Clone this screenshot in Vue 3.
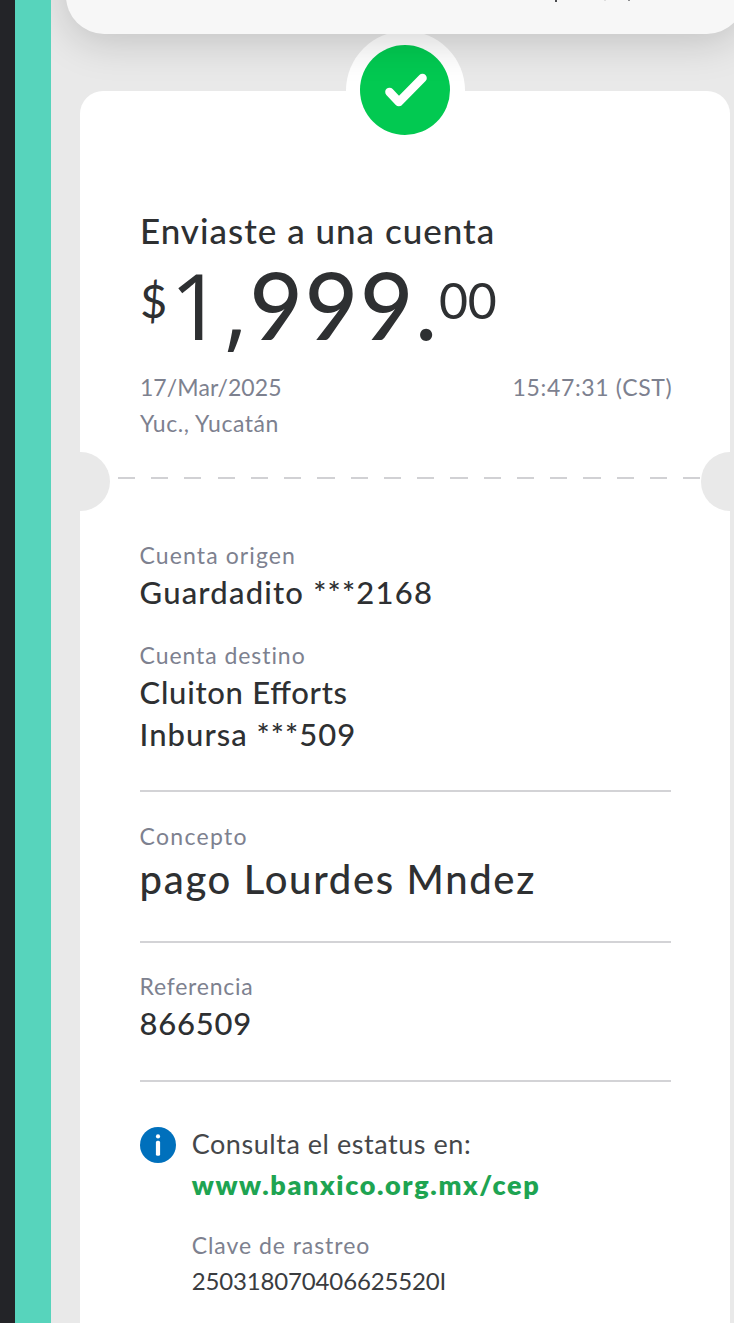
<template>
    <div class="screen">
        <div class="edge-dark"></div>
        <div class="edge-teal"></div>
        <div class="page">
            <div class="header-card">
                <span class="tail tail-main"></span>
                <span class="tail tail-comma"></span>
                <span class="tail tail-last"></span>
            </div>
            <div class="receipt">
                <div class="status">
                    <svg class="status-icon" viewBox="0 0 90 90">
                        <circle cx="45" cy="45" r="45" fill="#02c951" />
                        <path d="M29.5 47L38.9 57L62.5 33" fill="none" stroke="#fff" stroke-width="8.6"
                            stroke-linecap="round" stroke-linejoin="round" />
                    </svg>
                </div>
                <div class="summary">
                    <div class="title">Enviaste a una cuenta</div>
                    <div class="amount">
                        <span class="small currency">$</span>
                        <span class="big"><span class="thousand">1,</span>999.</span>
                        <span class="small cents">00</span>
                    </div>
                    <div class="when">
                        <span class="date">17/Mar/2025</span>
                        <span class="time">15:47:31 (CST)</span>
                    </div>
                    <div class="place">Yuc., Yucatán</div>
                </div>
                <div class="cut">
                    <div class="notch notch-left"></div>
                    <div class="dashes"></div>
                    <div class="notch notch-right"></div>
                </div>
                <div class="details">
                    <div class="group" v-for="item in details" :key="item.name" :class="item.name">
                        <div class="label">{{ item.label }}</div>
                        <div class="value" v-for="line in item.lines" :key="line.text" :class="line.name">{{ line.text }}</div>
                    </div>
                    <div class="check">
                        <svg class="info-icon" viewBox="0 0 36 36">
                            <circle cx="18" cy="18" r="18" fill="#0070bc" />
                            <circle cx="18" cy="9.4" r="2.1" fill="#fff" />
                            <rect x="15.9" y="13.8" width="4.2" height="15" rx="1.6" fill="#fff" />
                        </svg>
                        <div class="check-text">
                            <div class="hint">Consulta el estatus en:</div>
                            <div class="link">www.banxico.org.mx/cep</div>
                            <div class="label key-label">Clave de rastreo</div>
                            <div class="key">250318070406625520I</div>
                        </div>
                    </div>
                </div>
            </div>
        </div>
    </div>
</template>
<script setup>
import { ref } from 'vue'

const details = ref([
    {
        name: 'origin',
        label: 'Cuenta origen',
        lines: [{ name: 'account', text: 'Guardadito ***2168' }],
    },
    {
        name: 'target',
        label: 'Cuenta destino',
        lines: [
            { name: 'person', text: 'Cluiton Efforts' },
            { name: 'bank', text: 'Inbursa ***509' },
        ],
    },
    {
        name: 'concept',
        label: 'Concepto',
        lines: [{ name: 'reason', text: 'pago Lourdes Mndez' }],
    },
    {
        name: 'reference',
        label: 'Referencia',
        lines: [{ name: 'number', text: '866509' }],
    },
])
</script>
<style>
body {
    margin: 0;
    background-color: #e9e9e9;
}
</style>
<style scoped>
.screen {
    display: flex;
    width: 734px;
    height: 1323px;
    overflow: hidden;
    font-family: Lato, "Open Sans", sans-serif;
    color: #2e3032;
    white-space: nowrap;
}

.edge-dark {
    flex: none;
    width: 15px;
    background-color: #232428;
}

.edge-teal {
    flex: none;
    width: 36px;
    background-color: #57d4bc;
}

.page {
    position: relative;
    flex: none;
    width: 683px;
    overflow: hidden;
    background-color: #e9e9e9;
}

.header-card {
    position: absolute;
    z-index: 2;
    top: -100px;
    left: 15px;
    width: 679px;
    height: 134px;
    border-radius: 38px;
    background-color: #f7f7f7;
    box-shadow: 0 8px 40px rgba(0, 0, 0, .17);
}

/* lower ends of the heading letters that scrolled out of view */
.tail {
    position: absolute;
    top: 100px;
    width: 2px;
    height: 2px;
    background-color: #4a4b4e;
}

.tail-main {
    left: 489px;
}

.tail-comma {
    left: 538px;
    height: 1px;
    background-color: #dedede;
}

.tail-last {
    left: 562px;
    height: 1px;
    background-color: #8e8f91;
}

.receipt {
    position: relative;
    box-sizing: border-box;
    width: 650px;
    height: 1300px;
    margin: 90.5px 0 0 29.4px;
    padding-top: 117px;
    border-radius: 23px;
    background-color: #fff;
}

.status {
    position: absolute;
    top: -60px;
    left: 265.5px;
    display: flex;
    justify-content: center;
    align-items: center;
    width: 119px;
    height: 119px;
    border-radius: 50%;
    background-color: #fff;
}

.status-icon {
    width: 90px;
    height: 90px;
}

.summary {
    height: 244px;
    padding: 0 58px 0 59.5px;
}

.title {
    height: 44px;
    line-height: 44px;
    font-size: 35px;
    font-weight: 500;
    letter-spacing: 1px;
}

.amount {
    display: flex;
    height: 116px;
    line-height: 116px;
}

.small {
    font-size: 50px;
    line-height: 97px;
}

.currency {
    width: 30px;
    font-size: 47px;
}

.cents {
    letter-spacing: -.2px;
}

.big {
    font-size: 92px;
    line-height: 105px;
    font-weight: 500;
    letter-spacing: 1.9px;
}

.thousand {
    font-family: "Open Sans", sans-serif;
    letter-spacing: 1.6px;
}

.when {
    display: flex;
    justify-content: space-between;
    height: 36px;
    line-height: 36px;
    margin-top: 1px;
    font-size: 23px;
    color: #7d818f;
}

.date {
    letter-spacing: .1px;
}

.time {
    letter-spacing: .66px;
}

.place {
    height: 36px;
    line-height: 36px;
    font-size: 23px;
    letter-spacing: .55px;
    color: #7d818f;
}

.cut {
    display: flex;
    justify-content: space-between;
    height: 59px;
}

.notch {
    flex: none;
    width: 30px;
    height: 59px;
    background-color: #e9e9e9;
}

.notch-left {
    border-radius: 0 30px 30px 0;
}

.notch-right {
    width: 29px;
    border-radius: 30px 0 0 30px;
}

.dashes {
    flex: 1;
    height: 2px;
    margin: 25px 0 0 8px;
    background: repeating-linear-gradient(90deg, #d1d1d4 0 17px, transparent 17px 33.25px);
}

.details {
    padding: 27.5px 59px 0 59.2px;
}

.label {
    height: 34px;
    line-height: 34px;
    font-size: 23px;
    color: #7d818f;
}

.value {
    height: 42px;
    line-height: 40px;
    font-size: 31px;
    font-weight: 500;
}

.origin .label {
    letter-spacing: 1.1px;
}

.account {
    letter-spacing: 1.2px;
}

.target {
    height: 152px;
    margin-top: 24px;
    border-bottom: 2px solid #d3d3d6;
}

.target .label {
    letter-spacing: .93px;
}

.person {
    letter-spacing: .72px;
    font-feature-settings: "liga" 1;
}

.bank {
    letter-spacing: 1.04px;
}

.concept {
    height: 122px;
    padding-top: 27px;
    border-bottom: 2px solid #d3d3d6;
}

.concept .label {
    letter-spacing: 1.28px;
}

.reason {
    height: 50px;
    line-height: 53px;
    font-size: 40px;
    letter-spacing: 1.66px;
}

.reference {
    height: 111px;
    padding-top: 26px;
    border-bottom: 2px solid #d3d3d6;
}

.reference .label {
    letter-spacing: .75px;
}

.number {
    line-height: 41px;
    letter-spacing: .75px;
}

.check {
    display: flex;
    gap: 15.8px;
    padding-top: 41px;
}

.info-icon {
    flex: none;
    width: 36px;
    height: 36px;
    margin: 4px 0 0 .3px;
}

.hint {
    height: 42px;
    line-height: 42px;
    font-size: 27px;
    letter-spacing: .54px;
    color: #45474a;
}

.link {
    height: 42px;
    line-height: 40px;
    font-size: 27px;
    font-weight: 800;
    letter-spacing: 1.62px;
    color: #1ea452;
}

.key-label {
    margin-top: 21px;
    letter-spacing: .95px;
}

.key {
    height: 38px;
    line-height: 38px;
    font-size: 24px;
    letter-spacing: -.15px;
    color: #3a3c3f;
}
</style>
